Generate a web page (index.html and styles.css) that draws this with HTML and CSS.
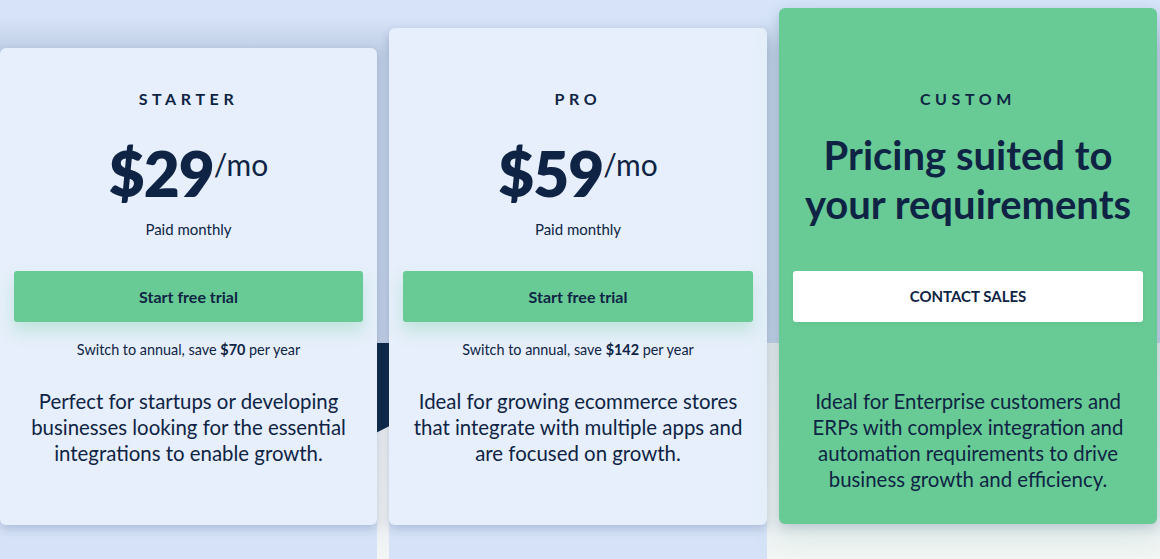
FILE: index.html
```html
<!DOCTYPE html>
<html lang="en">
<head>
  <meta charset="UTF-8">
  <meta name="viewport" content="width=device-width, initial-scale=1.0">
  <title>Pricing</title>
  <link rel="stylesheet" href="styles.css">
</head>
<body>
  <section class="pricing">
    <div class="plan plan-starter">
      <h2 class="plan-name">Starter</h2>
      <div class="price"><span class="amount">$29</span><span class="per">/mo</span></div>
      <p class="billing">Paid monthly</p>
      <a href="#" class="button">Start free trial</a>
      <p class="saving">Switch to annual, save <strong>$70</strong> per year</p>
      <p class="summary">Perfect for startups or developing businesses looking for the essential integrations to enable growth.</p>
    </div>

    <div class="plan plan-pro">
      <h2 class="plan-name">Pro</h2>
      <div class="price"><span class="amount">$59</span><span class="per">/mo</span></div>
      <p class="billing">Paid monthly</p>
      <a href="#" class="button">Start free trial</a>
      <p class="saving">Switch to annual, save <strong>$142</strong> per year</p>
      <p class="summary">Ideal for growing ecommerce stores that integrate with multiple apps and are focused on growth.</p>
    </div>

    <div class="plan plan-custom">
      <h2 class="plan-name">Custom</h2>
      <p class="headline">Pricing suited to your requirements</p>
      <a href="#" class="button button-light">Contact sales</a>
      <p class="summary">Ideal for Enterprise customers and ERPs with complex integration and automation requirements to drive business growth and efficiency.</p>
    </div>
  </section>
</body>
</html>
```

FILE: styles.css
```css
body {
  margin: 0;
  background-color: #d6e3f8;
  font-family: Lato, "Liberation Sans", sans-serif;
  color: #0f2444;
}
.pricing {
  position: relative;
  display: flex;
  align-items: flex-end;
  gap: 12px;
  height: 559px;
  padding-bottom: 34px;
  box-sizing: border-box;
  background: linear-gradient(to bottom, #d6e3f8 0, #d6e3f8 18px, #bfcde4 52px, #bfcde4 343px, #e3e7ec 343px, #eceff2 525px, #f3f6f5 100%);
  overflow: hidden;
}
/* navy band of the section behind the cards */
.pricing::before {
  content: "";
  position: absolute;
  left: 340px;
  top: 343px;
  width: 120px;
  height: 108px;
  background-color: #0e2848;
  clip-path: polygon(0 0, 100% 0, 100% 44%, 0 100%);
}
.plan {
  position: relative;
  z-index: 1;
  display: flex;
  flex-direction: column;
  align-items: center;
  width: 378px;
  flex-shrink: 0;
  padding: 0 14px;
  box-sizing: border-box;
  background-color: #e6effb;
  border-radius: 6px;
  text-align: center;
  box-shadow: 0 4px 10px rgba(40, 62, 110, 0.22), 0 40px 0 #d5e2f7;
}
.plan-starter {
  width: 377px;
  height: 477px;
  padding-top: 41px;
}
.plan-pro {
  height: 497px;
  padding-top: 61px;
}
.plan-custom {
  height: 516px;
  margin-bottom: 1px;
  padding-top: 81px;
  background-color: #68cb95;
  box-shadow: 0 4px 12px rgba(40, 62, 110, 0.2), 0 16px 30px rgba(104, 203, 149, 0.12);
}
.plan-name {
  margin: 0;
  font-size: 16px;
  line-height: 20px;
  font-weight: 700;
  letter-spacing: 4.6px;
  text-transform: uppercase;
}
.price {
  display: flex;
  align-items: flex-start;
  margin-top: 33px;
  height: 63px;
}
.amount {
  font-size: 62px;
  line-height: 62px;
  font-weight: 800;
  letter-spacing: -1px;
}
.per {
  font-size: 30px;
  line-height: 44px;
}
.billing {
  margin: 14px 0 0;
  font-size: 15px;
  line-height: 20px;
}
.button {
  display: block;
  width: 100%;
  height: 51px;
  margin-top: 32px;
  background-color: #68cb95;
  border-radius: 3px;
  color: #0f2444;
  font-size: 16px;
  line-height: 51px;
  font-weight: 700;
  text-decoration: none;
  box-shadow: 0 9px 16px rgba(104, 203, 149, 0.3);
}
.button-light {
  margin-top: 42px;
  background-color: #fff;
  text-transform: uppercase;
  font-size: 15px;
  box-shadow: 0 2px 4px rgba(40, 90, 60, 0.08);
}
.saving {
  margin: 18px 0 0;
  font-size: 14.4px;
  line-height: 20px;
}
.summary {
  margin: 28px 0 0;
  padding: 0 6px;
  font-size: 20.4px;
  line-height: 26px;
}
.plan-custom .summary {
  margin-top: 66px;
}
.headline {
  margin: 22px 0 0;
  font-size: 40px;
  line-height: 49px;
  font-weight: 700;
}
```
